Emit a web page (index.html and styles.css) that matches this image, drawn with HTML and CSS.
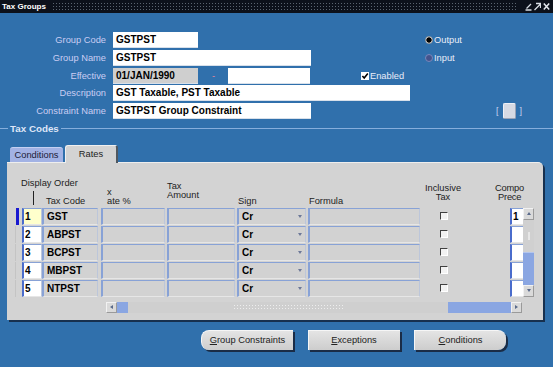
FILE: index.html
```html
<!DOCTYPE html>
<html>
<head>
<meta charset="utf-8">
<title>Tax Groups</title>
<link rel="stylesheet" href="styles.css">
</head>
<body>
<div class="titlebar">
  <span class="title">Tax Groups</span>
  <span class="dots"></span>
  <span class="winbtns">
    <svg width="7" height="9" viewBox="0 0 7 9"><path d="M6 2 L1.5 6.5 M0.5 8 H6.5" stroke="#d8dde4" stroke-width="1.3" fill="none"/></svg>
    <svg width="7" height="9" viewBox="0 0 7 9"><path d="M0.5 8 L6 2.5 M2 1.5 H6.5 V6" stroke="#d8dde4" stroke-width="1.3" fill="none"/></svg>
    <svg width="7" height="9" viewBox="0 0 7 9"><path d="M0.8 1.5 L6.2 7.5 M6.2 1.5 L0.8 7.5" stroke="#e4e8ee" stroke-width="1.5" fill="none"/></svg>
  </span>
</div>

<div class="form">
  <div class="row">
    <span class="lbl">Group Code</span>
    <span class="fld w-short">GSTPST</span>
    <span class="radio r1"><span class="dot on"></span>Output</span>
  </div>
  <div class="row">
    <span class="lbl">Group Name</span>
    <span class="fld w-mid">GSTPST</span>
    <span class="radio r2"><span class="dot"></span>Input</span>
  </div>
  <div class="row">
    <span class="lbl">Effective</span>
    <span class="fld w-short grey">01/JAN/1990</span>
    <span class="dash">-</span>
    <span class="fld w-eff"></span>
    <span class="chk-lbl"><svg class="cb" width="8" height="8" viewBox="0 0 8 8"><rect x="0" y="0" width="8" height="8" fill="#fff"/><path d="M1.4 4 L3.2 6 L6.8 1.6" stroke="#000" stroke-width="1.6" fill="none"/></svg>Enabled</span>
  </div>
  <div class="row">
    <span class="lbl">Description</span>
    <span class="fld w-long">GST Taxable, PST Taxable</span>
  </div>
  <div class="row">
    <span class="lbl">Constraint Name</span>
    <span class="fld w-mid">GSTPST Group Constraint</span>
    <span class="lov">[<span class="lov-btn"></span>]</span>
  </div>
</div>

<div class="sect"><span class="sect-title">Tax Codes</span></div>

<div class="tabs">
  <span class="tab">Conditions</span>
  <span class="tab active">Rates</span>
</div>

<div class="panel">
  <div class="thead">
    <div class="h-disp">
      <div class="hl">Display Order</div>
      <div class="h-sub"><span class="tick"></span><span class="hl">Tax Code</span></div>
    </div>
    <div class="h-rate"><div class="hl">x</div><div class="hl">ate %</div></div>
    <div class="h-amt"><div class="hl">Tax</div><div class="hl">Amount</div></div>
    <div class="h-sign"><div class="hl">Sign</div></div>
    <div class="h-form"><div class="hl">Formula</div></div>
    <div class="h-incl"><div class="hl">Inclusive</div><div class="hl">Tax</div></div>
    <div class="h-comp"><div class="hl c1">Compo</div><div class="hl c2">Prece</div></div>
  </div>

  <div class="tbody">
    <div class="rows">
      <div class="trow">
        <span class="ind cur"></span>
        <span class="cell c-disp cur">1</span>
        <span class="cell c-code">GST</span>
        <span class="cell c-rate"></span>
        <span class="cell c-amt"></span>
        <span class="cell c-sign">Cr<i class="arr"></i></span>
        <span class="cell c-form"></span>
        <span class="c-incl"><span class="box"></span></span>
        <span class="cell c-comp">1</span>
      </div>
      <div class="trow">
        <span class="ind"></span>
        <span class="cell c-disp">2</span>
        <span class="cell c-code">ABPST</span>
        <span class="cell c-rate"></span>
        <span class="cell c-amt"></span>
        <span class="cell c-sign">Cr<i class="arr"></i></span>
        <span class="cell c-form"></span>
        <span class="c-incl"><span class="box"></span></span>
        <span class="cell c-comp"></span>
      </div>
      <div class="trow">
        <span class="ind"></span>
        <span class="cell c-disp">3</span>
        <span class="cell c-code">BCPST</span>
        <span class="cell c-rate"></span>
        <span class="cell c-amt"></span>
        <span class="cell c-sign">Cr<i class="arr"></i></span>
        <span class="cell c-form"></span>
        <span class="c-incl"><span class="box"></span></span>
        <span class="cell c-comp"></span>
      </div>
      <div class="trow">
        <span class="ind"></span>
        <span class="cell c-disp">4</span>
        <span class="cell c-code">MBPST</span>
        <span class="cell c-rate"></span>
        <span class="cell c-amt"></span>
        <span class="cell c-sign">Cr<i class="arr"></i></span>
        <span class="cell c-form"></span>
        <span class="c-incl"><span class="box"></span></span>
        <span class="cell c-comp"></span>
      </div>
      <div class="trow">
        <span class="ind"></span>
        <span class="cell c-disp">5</span>
        <span class="cell c-code">NTPST</span>
        <span class="cell c-rate"></span>
        <span class="cell c-amt"></span>
        <span class="cell c-sign">Cr<i class="arr"></i></span>
        <span class="cell c-form"></span>
        <span class="c-incl"><span class="box"></span></span>
        <span class="cell c-comp"></span>
      </div>
    </div>
    <div class="vscroll">
      <span class="sb-btn"><i class="tri up"></i></span>
      <span class="v-track"><span class="v-mark"></span></span>
      <span class="v-thumb"></span>
      <span class="sb-btn"><i class="tri down"></i></span>
    </div>
  </div>

  <div class="hscroll">
    <span class="sb-btn h"><i class="tri left"></i></span>
    <span class="h-thumb"></span>
    <span class="h-track"><span class="h-dots"></span></span>
    <span class="h-blue"></span>
    <span class="sb-btn h"><i class="tri right"></i></span>
  </div>
</div>

<div class="buttons">
  <span class="btn first"><u>G</u>roup Constraints</span>
  <span class="btn"><u>E</u>xceptions</span>
  <span class="btn last"><u>C</u>onditions</span>
</div>
</body>
</html>
```

FILE: styles.css
```css
* { box-sizing: border-box; }
html, body { margin: 0; padding: 0; }
body {
  width: 553px;
  height: 367px;
  overflow: hidden;
  background: #3070ac;
  font-family: "Liberation Sans", Arial, sans-serif;
  font-size: 9.3px;
  color: #000;
}

/* title bar */
.titlebar {
  height: 13px;
  background: #0c111b;
  display: flex;
  align-items: center;
  padding: 0 3px 0 2px;
  color: #fff;
}
.title { font-weight: bold; font-size: 8px; white-space: nowrap; }
.dots {
  flex: 1;
  height: 9px;
  margin: 0 8px 0 6px;
  background-image: radial-gradient(circle, #5a6470 0.7px, transparent 1px);
  background-size: 3px 3px;
}
.winbtns { display: flex; gap: 2px; }
.winbtns svg { display: block; }

/* header form */
.form {
  padding-top: 19px;
  display: flex;
  flex-direction: column;
  gap: 1.8px;
}
.row { display: flex; align-items: center; height: 16px; }
.lbl {
  width: 106px;
  margin-right: 7px;
  text-align: right;
  color: #cacdf3;
  white-space: nowrap;
}
.fld {
  height: 16px;
  background: #fff;
  font-weight: bold;
  font-size: 10px;
  line-height: 16px;
  padding-left: 3px;
  white-space: nowrap;
  overflow: hidden;
  border-bottom: 1px solid #d8e0ea;
}
.fld.grey { background: #cfcfcf; }
.w-short { width: 85px; }
.w-mid { width: 198px; }
.w-long { width: 297px; }
.w-eff { width: 82px; }
.dash { color: #f08898; width: 30px; padding-left: 14px; font-size: 9px; }

.radio { display: flex; align-items: center; color: #e8ecf8; gap: 1px; }
.r1 { margin-left: 227px; margin-top: -1px; }
.r2 { margin-left: 114px; margin-top: 1px; }
.dot {
  width: 8px; height: 8px; border-radius: 50%;
  background: #44538c;
  border: 1px solid #7888bc;
}
.dot.on { background: radial-gradient(circle, #000 2.4px, #c8c8c8 2.9px); border-color: #a0a0a0; }

.chk-lbl { display: flex; align-items: center; margin-left: 51px; color: #e8ecf8; gap: 1px; }
.cb { display: block; }

.lov { display: flex; align-items: center; margin-left: 185px; color: #c8d4f0; gap: 4px; font-size: 9px; }
.lov-btn { width: 13px; height: 16px; background: #d6dae4; border: 1px solid #eef0f6; border-right-color: #9aa4b8; border-bottom-color: #9aa4b8; border-radius: 2px; }

/* section separator */
.sect { display: flex; align-items: center; height: 12px; margin-top: 3.3px; }
.sect::before { content: ""; width: 8px; height: 1px; background: #86aedc; }
.sect::after { content: ""; flex: 1; height: 1px; background: #86aedc; }
.sect-title { color: #dfe6f8; font-weight: bold; font-size: 9.8px; padding: 0 2px; }

/* tabs */
.tabs {
  display: flex;
  align-items: flex-end;
  height: 17px;
  margin: 10.5px 0 0 10px;
  gap: 2px;
  position: relative;
  z-index: 1;
}
.tab {
  width: 53px;
  height: 15px;
  line-height: 15px;
  text-align: center;
  background: #a2b2e4;
  color: #1c2038;
  border-radius: 3px 3px 0 0;
  border-top: 1px solid #c4d0f2;
}
.tab.active {
  height: 18px;
  line-height: 17px;
  margin-bottom: -1px;
  background: #d3d3d3;
  color: #222;
  border-top: 1px solid #f0f0f0;
  border-left: 1px solid #f0f0f0;
  border-right: 2px solid #505860;
}

/* panel */
.panel {
  margin-left: 7px;
  width: 536px;
  height: 158px;
  background: #d3d3d3;
  border-top: 1px solid #eeeeee;
  border-top-right-radius: 5px;
  box-shadow: 2px 2px 0 #17304e;
  padding-left: 8px;
}
.thead {
  height: 45px;
  display: flex;
  align-items: flex-end;
  padding-bottom: 1.75px;
  color: #222;
}
.hl { line-height: 9px; white-space: nowrap; }
.h-disp { width: 86px; }
.h-disp > .hl { padding-left: 6px; margin-bottom: 1px; }
.h-sub { display: flex; align-items: flex-end; height: 17px; }
.tick { width: 1px; height: 14px; background: #222; margin-left: 18px; margin-bottom: 1px; }
.h-sub .hl { margin-left: 12px; }
.h-rate { width: 66px; padding-left: 6px; }
.h-amt { width: 70px; padding-bottom: 6px; }
.h-sign { width: 71px; padding-left: 1px; }
.h-form { width: 112px; padding-left: 1px; }
.h-incl { width: 74px; padding-bottom: 4px; }
.h-incl .hl { width: 46px; text-align: center; }
.h-comp { width: 29px; padding-bottom: 4px; }
.c1 { padding-left: 1px; letter-spacing: -0.2px; }
.c2 { padding-left: 4px; letter-spacing: -0.2px; }

.tbody { display: flex; }
.rows { display: flex; flex-direction: column; gap: 1px; }
.trow { display: flex; height: 17px; align-items: stretch; }
.ind { width: 4px; margin-right: 3px; border-left: 1px solid #c4c4c4; }
.ind.cur { border-left: none; background: linear-gradient(to right, transparent 1px, #1818d0 1px); }
.cell {
  font-weight: bold;
  font-size: 10px;
  line-height: 15px;
  padding-left: 3px;
  white-space: nowrap;
  overflow: hidden;
  background: #d2d2d2;
  border-top: 1px solid #88a2d6;
  border-left: 2px solid #88a2d6;
  border-right: 1px solid #bcc6da;
  border-bottom: 1px solid #e6e6e6;
}
.c-disp { width: 20px; background: #fff; border-left-color: #4a6ccc; padding-left: 1px; }
.c-disp.cur { background: #ffffcc; }
.c-code { width: 56px; margin-right: 3px; }
.c-rate { width: 64px; margin-right: 2px; }
.c-amt { width: 68px; margin-right: 2px; }
.c-sign { width: 69px; margin-right: 2px; display: flex; justify-content: space-between; align-items: center; }
.arr {
  width: 0; height: 0;
  border-left: 2.5px solid transparent;
  border-right: 2.5px solid transparent;
  border-top: 3px solid #6c7898;
  margin-right: 3px;
}
.c-form { width: 112px; }
.c-incl { width: 90px; display: flex; align-items: center; padding-left: 20px; }
.box {
  width: 8px; height: 8px;
  background: #f2f2f2;
  border-top: 1px solid #404040;
  border-left: 1px solid #404040;
  border-right: 1px solid #ffffff;
  border-bottom: 1px solid #ffffff;
}
.c-comp { width: 13px; background: #fff; border-left-color: #4a6ccc; padding-left: 1px; border-right: none; }

.vscroll {
  width: 11px;
  height: 89px;
  display: flex;
  flex-direction: column;
  background: #d0d0d0;
}
.sb-btn {
  width: 11px;
  height: 12px;
  flex: none;
  display: flex;
  align-items: center;
  justify-content: center;
  background: #dadada;
  border: 1px solid #f2f2f2;
  border-right-color: #9a9a9a;
  border-bottom-color: #9a9a9a;
}
.v-track { flex: 1; display: flex; align-items: flex-start; justify-content: center; padding-top: 12px; }
.v-mark { width: 2px; height: 8px; background-image: radial-gradient(circle, #f4f4f4 0.6px, transparent 0.9px); background-size: 2px 2px; }
.v-thumb { height: 33px; flex: none; background: #8aa6e2; border-top: 1px solid #b4c6ee; }
.tri { width: 0; height: 0; display: block; }
.tri.up { border-left: 2.5px solid transparent; border-right: 2.5px solid transparent; border-bottom: 3px solid #5a6a8a; }
.tri.down { border-left: 2.5px solid transparent; border-right: 2.5px solid transparent; border-top: 3px solid #5a6a8a; }
.tri.left { border-top: 2.5px solid transparent; border-bottom: 2.5px solid transparent; border-right: 3px solid #5a6a8a; }
.tri.right { border-top: 2.5px solid transparent; border-bottom: 2.5px solid transparent; border-left: 3px solid #5a6a8a; }

.hscroll {
  display: flex;
  width: 416px;
  height: 11px;
  margin: 5px 0 0 91px;
  background: #cfcfcf;
}
.sb-btn.h { height: 11px; }
.h-thumb { width: 11px; background: #8aa6e2; }
.h-track { flex: 1; padding-left: 105px; display: flex; align-items: center; }
.h-dots {
  width: 110px; height: 7px;
  background-image: radial-gradient(circle, #eeeeee 0.7px, transparent 1px);
  background-size: 3px 3px;
}
.h-blue { width: 63px; background: #8aa6e2; }

/* bottom buttons */
.buttons {
  display: flex;
  gap: 14.5px;
  margin: 10px 0 0 201px;
}
.btn {
  width: 92px;
  height: 20px;
  line-height: 18px;
  text-align: center;
  color: #222;
  background: linear-gradient(#e4e4e4, #cdcdcd);
  border-top: 1px solid #f6f6f6;
  border-left: 1px solid #f6f6f6;
  box-shadow: 2px 2px 0 #1a2c46;
  white-space: nowrap;
}
.btn.first { border-radius: 8px 0 0 8px; }
.btn.last { border-radius: 0 8px 8px 0; }
```
